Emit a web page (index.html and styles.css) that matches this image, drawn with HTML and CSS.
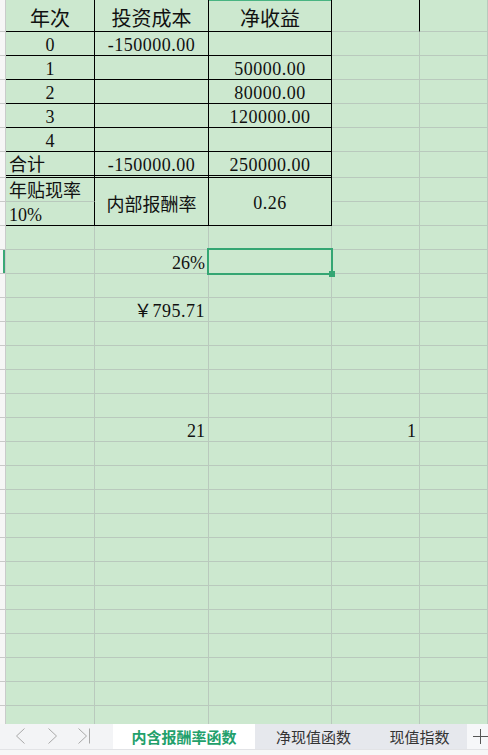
FILE: index.html
```html
<!DOCTYPE html>
<html lang="zh">
<head>
<meta charset="utf-8">
<title>内含报酬率函数</title>
<link rel="stylesheet" href="styles.css">
</head>
<body>
<div class="sheet">
  <!-- header row -->
  <div class="c s"></div>
  <div class="c bk hd cjk ctr">年次</div>
  <div class="c bk hd cjk ctr">投资成本</div>
  <div class="c bk hd cjk ctr colsel">净收益</div>
  <div class="c bkr"></div>
  <div class="c"></div>
  <!-- 0 -->
  <div class="c s"></div>
  <div class="c bk ctr">0</div>
  <div class="c bk ctr num">-150000.00</div>
  <div class="c bk"></div>
  <div class="c"></div>
  <div class="c"></div>
  <!-- 1 -->
  <div class="c s"></div>
  <div class="c bk ctr">1</div>
  <div class="c bk"></div>
  <div class="c bk ctr num">50000.00</div>
  <div class="c"></div>
  <div class="c"></div>
  <!-- 2 -->
  <div class="c s"></div>
  <div class="c bk ctr">2</div>
  <div class="c bk"></div>
  <div class="c bk ctr num">80000.00</div>
  <div class="c"></div>
  <div class="c"></div>
  <!-- 3 -->
  <div class="c s"></div>
  <div class="c bk ctr">3</div>
  <div class="c bk"></div>
  <div class="c bk ctr num">120000.00</div>
  <div class="c"></div>
  <div class="c"></div>
  <!-- 4 -->
  <div class="c s"></div>
  <div class="c bk ctr">4</div>
  <div class="c bk"></div>
  <div class="c bk"></div>
  <div class="c"></div>
  <div class="c"></div>
  <!-- total -->
  <div class="c s"></div>
  <div class="c bk dbl cjk">合计</div>
  <div class="c bk dbl ctr num">-150000.00</div>
  <div class="c bk dbl ctr num">250000.00</div>
  <div class="c"></div>
  <div class="c"></div>
  <!-- rate rows -->
  <div class="c s"></div>
  <div class="c bkr cjk">年贴现率</div>
  <div class="c bk merged cjk">内部报酬率</div>
  <div class="c bk merged num">0.26</div>
  <div class="c"></div>
  <div class="c"></div>
  <div class="c s"></div>
  <div class="c bk">10%</div>
  <div class="c"></div>
  <div class="c"></div>
  <!-- empty -->
  <div class="c s"></div><div class="c"></div><div class="c"></div><div class="c"></div><div class="c"></div><div class="c"></div>
  <!-- 26% -->
  <div class="c s rowsel"></div>
  <div class="c"></div>
  <div class="c rt">26%</div>
  <div class="c"><span class="selbox"></span></div>
  <div class="c"></div>
  <div class="c"></div>
  <!-- empty -->
  <div class="c s"></div><div class="c"></div><div class="c"></div><div class="c"></div><div class="c"></div><div class="c"></div>
  <!-- yen -->
  <div class="c s"></div>
  <div class="c"></div>
  <div class="c rt num">￥795.71</div>
  <div class="c"></div>
  <div class="c"></div>
  <div class="c"></div>
  <!-- empty x4 -->
  <div class="c s"></div><div class="c"></div><div class="c"></div><div class="c"></div><div class="c"></div><div class="c"></div>
  <div class="c s"></div><div class="c"></div><div class="c"></div><div class="c"></div><div class="c"></div><div class="c"></div>
  <div class="c s"></div><div class="c"></div><div class="c"></div><div class="c"></div><div class="c"></div><div class="c"></div>
  <div class="c s"></div><div class="c"></div><div class="c"></div><div class="c"></div><div class="c"></div><div class="c"></div>
  <!-- 21 / 1 -->
  <div class="c s"></div>
  <div class="c"></div>
  <div class="c rt">21</div>
  <div class="c"></div>
  <div class="c rt">1</div>
  <div class="c"></div>
  <!-- empty x12 -->
  <div class="c s"></div><div class="c"></div><div class="c"></div><div class="c"></div><div class="c"></div><div class="c"></div>
  <div class="c s"></div><div class="c"></div><div class="c"></div><div class="c"></div><div class="c"></div><div class="c"></div>
  <div class="c s"></div><div class="c"></div><div class="c"></div><div class="c"></div><div class="c"></div><div class="c"></div>
  <div class="c s"></div><div class="c"></div><div class="c"></div><div class="c"></div><div class="c"></div><div class="c"></div>
  <div class="c s"></div><div class="c"></div><div class="c"></div><div class="c"></div><div class="c"></div><div class="c"></div>
  <div class="c s"></div><div class="c"></div><div class="c"></div><div class="c"></div><div class="c"></div><div class="c"></div>
  <div class="c s"></div><div class="c"></div><div class="c"></div><div class="c"></div><div class="c"></div><div class="c"></div>
  <div class="c s"></div><div class="c"></div><div class="c"></div><div class="c"></div><div class="c"></div><div class="c"></div>
  <div class="c s"></div><div class="c"></div><div class="c"></div><div class="c"></div><div class="c"></div><div class="c"></div>
  <div class="c s"></div><div class="c"></div><div class="c"></div><div class="c"></div><div class="c"></div><div class="c"></div>
  <div class="c s"></div><div class="c"></div><div class="c"></div><div class="c"></div><div class="c"></div><div class="c"></div>
  <div class="c s"></div><div class="c"></div><div class="c"></div><div class="c"></div><div class="c"></div><div class="c"></div>
</div>
<div class="tabbar">
  <div class="nav">
    <svg width="113" height="25" viewBox="0 0 113 25">
      <polyline points="24.5,4.5 16.5,12 24.5,19.5" fill="none" stroke="#a9a9a9" stroke-width="1"/>
      <polyline points="48.5,4.5 56.5,12 48.5,19.5" fill="none" stroke="#a9a9a9" stroke-width="1"/>
      <polyline points="78.5,4.5 86.5,12 78.5,19.5" fill="none" stroke="#a9a9a9" stroke-width="1"/>
      <line x1="89.5" y1="4.5" x2="89.5" y2="19.5" stroke="#a9a9a9" stroke-width="1"/>
    </svg>
  </div>
  <div class="tab on">内含报酬率函数</div>
  <div class="tab off w1">净现值函数</div>
  <div class="tab off w2">现值指数</div>
  <div class="add">
    <svg width="15" height="15" viewBox="0 0 15 15">
      <line x1="0" y1="7.5" x2="15" y2="7.5" stroke="#555" stroke-width="1"/>
      <line x1="7.5" y1="0" x2="7.5" y2="15" stroke="#555" stroke-width="1"/>
    </svg>
  </div>
</div>
<div class="foot"></div>
</body>
</html>
```
FILE: styles.css
```css
html, body {
  margin: 0;
  padding: 0;
}
body {
  width: 488px;
  height: 755px;
  overflow: hidden;
  background: #cce8cf;
  font-family: "Liberation Serif", "Noto Sans CJK SC", serif;
  color: #111;
}
.sheet {
  display: grid;
  grid-template-columns: 6px 89px 114px 123px 88px 1fr;
  grid-template-rows: 32px repeat(5, 24px) 26px repeat(23, 24px);
  height: 724px;
  overflow: hidden;
  background: #cce8cf;
}
.c {
  box-sizing: border-box;
  border-right: 1px solid #b9c9bd;
  border-bottom: 1px solid #b9c9bd;
  font-size: 18px;
  line-height: 20px;
  padding: 3px 3px 0 3px;
  white-space: nowrap;
  position: relative;
  min-width: 0;
}
.s {
  background: #f6f6f6;
  border-right-color: #c9cbca;
  border-bottom-color: #c9c9c9;
  padding: 0;
}
.rowsel {
  background: linear-gradient(to right, #f6f6f6 3px, #3aa876 3px);
}
.bk {
  border-right-color: #000;
  border-bottom-color: #000;
}
.bkr {
  border-right-color: #000;
}
.dbl {
  border-bottom: 3px double #000;
}
.ctr { text-align: center; }
.rt { text-align: right; }
.num { letter-spacing: 0.5px; }
.cjk {
  font-family: "Noto Sans CJK SC", sans-serif;
  padding-top: 1px;
}
.hd {
  font-size: 20px;
  line-height: 26px;
  padding-top: 5px;
}
.colsel {
  box-shadow: inset 0 1px 0 #48b482;
}
.merged {
  grid-row: span 2;
  display: flex;
  align-items: center;
  justify-content: center;
  padding-top: 3px;
}
.selbox {
  position: absolute;
  left: -2px;
  top: -2px;
  right: -2px;
  bottom: -2px;
  border: 2px solid #34a673;
  z-index: 2;
}
.selbox::after {
  content: "";
  position: absolute;
  right: -4px;
  bottom: -4px;
  width: 6px;
  height: 6px;
  background: #34a673;
}
.tabbar {
  display: flex;
  height: 25px;
  background: #f2f3f5;
  font-family: "Noto Sans CJK SC", sans-serif;
  font-size: 15px;
}
.nav {
  width: 113px;
  flex: none;
  background: #f3f4f6;
}
.nav svg { display: block; }
.tab {
  flex: none;
  display: flex;
  align-items: center;
  justify-content: center;
  line-height: 1;
}
.tab.on {
  width: 142px;
  background: #ffffff;
  color: #22a06b;
  font-weight: 700;
}
.tab.off {
  background: #e6e8ed;
  color: #333;
}
.w1 { width: 117px; }
.w2 { width: 95px; }
.add {
  flex: 1;
  background: #f6f7f9;
  display: flex;
  align-items: center;
  padding-left: 6px;
}
.add svg { display: block; }
.foot {
  height: 6px;
  box-sizing: border-box;
  background: #f7f7f7;
  border-top: 1px solid #e2e3e6;
}
```
